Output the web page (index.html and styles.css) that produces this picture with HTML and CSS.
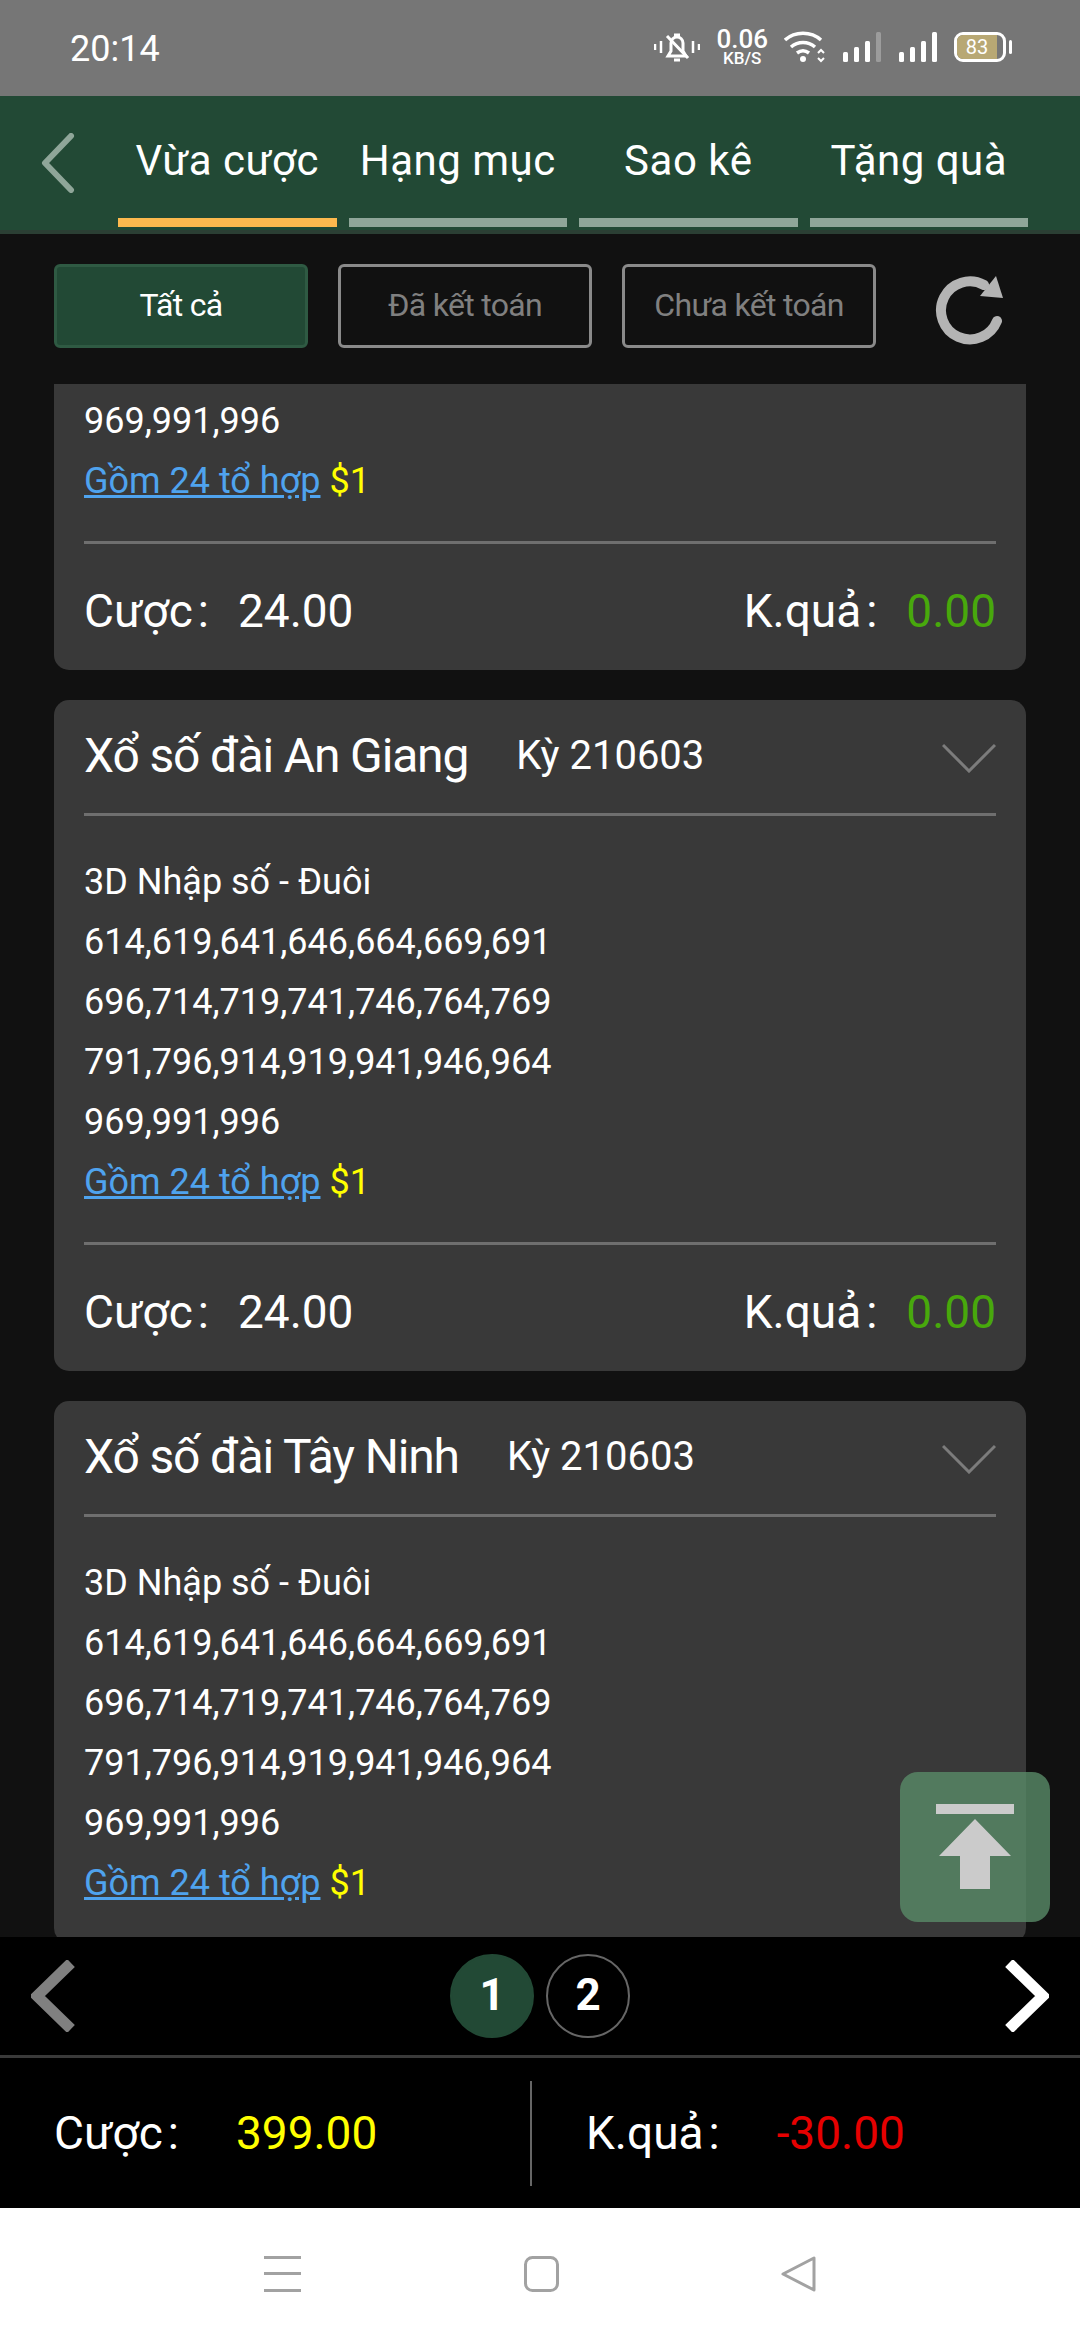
FILE: index.html
```html
<!DOCTYPE html>
<html>
<head>
    <title>Vừa cược</title>
    <link rel="stylesheet" href="styles.css">
</head>
<body>
<div class="phone">
    <div class="status-bar">
        <span class="clock">20:14</span>
        <div class="status-icons">
            <svg class="ic-bell" width="46" height="32" viewBox="0 0 46 32" fill="none" stroke="#fff" stroke-width="3">
                <path d="M1 13v6M7 10v12M39 10v12M45 13v6" stroke-width="2.5"/>
                <path d="M14 25h18l-3-5v-8a6 6 0 0 0-12 0v8z"/>
                <path d="M20 4h6M20 29h6M13 5l21 22"/>
            </svg>
            <div class="speed"><span class="speed-num">0.06</span><span class="speed-unit">KB/S</span></div>
            <svg class="ic-wifi" width="42" height="32" viewBox="0 0 42 32" fill="none" stroke="#fff" stroke-width="3.5">
                <path d="M1 9c10-9 26-9 36 0M7 16c7-6 17-6 24 0M13 22c4-3 8-3 12 0"/>
                <circle cx="19" cy="28" r="3" fill="#fff" stroke="none"/>
                <path d="M34 22l3-3 3 3M34 27l3 3 3-3" stroke-width="2"/>
            </svg>
            <svg width="40" height="32" viewBox="0 0 40 32" fill="#fff">
                <rect x="1" y="21" width="5" height="10" rx="1.5"/>
                <rect x="12" y="16" width="5" height="15" rx="1.5"/>
                <rect x="23" y="10" width="5" height="21" rx="1.5"/>
                <rect x="34" y="1" width="5" height="30" rx="1.5" fill="#9c9c9c"/>
            </svg>
            <svg width="40" height="32" viewBox="0 0 40 32" fill="#fff">
                <rect x="1" y="21" width="5" height="10" rx="1.5"/>
                <rect x="12" y="16" width="5" height="15" rx="1.5"/>
                <rect x="23" y="10" width="5" height="21" rx="1.5"/>
                <rect x="34" y="1" width="5" height="30" rx="1.5"/>
            </svg>
            <div class="battery">
                <div class="battery-body"><span class="battery-fill">83</span></div>
                <div class="battery-nub"></div>
            </div>
        </div>
    </div>

    <div class="top-bar">
        <svg class="back" width="36" height="60" viewBox="0 0 36 60" fill="none" stroke="#8fa699" stroke-width="6" stroke-linecap="round" stroke-linejoin="round">
            <path d="M31 3L5 30l26 27"/>
        </svg>
        <div class="tabs">
            <div class="tab active">Vừa cược</div>
            <div class="tab">Hạng mục</div>
            <div class="tab">Sao kê</div>
            <div class="tab">Tặng quà</div>
        </div>
    </div>

    <div class="filters">
        <div class="filter on">Tất cả</div>
        <div class="filter">Đã kết toán</div>
        <div class="filter">Chưa kết toán</div>
        <svg class="refresh" width="72" height="72" viewBox="0 0 72 72" fill="none">
            <path d="M63 47A29 29 0 1 1 50 11" stroke="#b4b4b4" stroke-width="10" stroke-linecap="round"/>
            <path d="M62 2l7 22-23-2z" fill="#b4b4b4"/>
        </svg>
    </div>

    <div class="list">
        <div class="card cut">
            <div class="card-body">
                <div class="row">969,991,996</div>
                <div class="row"><a class="link">Gồm 24 tổ hợp</a> <span class="price">$1</span></div>
            </div>
            <div class="card-foot">
                <div><span class="key">Cược</span><span class="colon">:</span>24.00</div>
                <div><span class="key">K.quả</span><span class="colon">:</span><span class="green">0.00</span></div>
            </div>
        </div>

        <div class="card">
            <div class="card-head">
                <span class="title">Xổ số đài An Giang</span>
                <span class="period">Kỳ 210603</span>
                <svg class="chev" width="54" height="30" viewBox="0 0 54 30" fill="none" stroke="#7c7c7c" stroke-width="3"><path d="M1 2l26 26L53 2"/></svg>
            </div>
            <div class="card-body">
                <div class="row">3D Nhập số - Đuôi</div>
                <div class="row">614,619,641,646,664,669,691</div>
                <div class="row">696,714,719,741,746,764,769</div>
                <div class="row">791,796,914,919,941,946,964</div>
                <div class="row">969,991,996</div>
                <div class="row"><a class="link">Gồm 24 tổ hợp</a> <span class="price">$1</span></div>
            </div>
            <div class="card-foot">
                <div><span class="key">Cược</span><span class="colon">:</span>24.00</div>
                <div><span class="key">K.quả</span><span class="colon">:</span><span class="green">0.00</span></div>
            </div>
        </div>

        <div class="card">
            <div class="card-head">
                <span class="title">Xổ số đài Tây Ninh</span>
                <span class="period">Kỳ 210603</span>
                <svg class="chev" width="54" height="30" viewBox="0 0 54 30" fill="none" stroke="#7c7c7c" stroke-width="3"><path d="M1 2l26 26L53 2"/></svg>
            </div>
            <div class="card-body">
                <div class="row">3D Nhập số - Đuôi</div>
                <div class="row">614,619,641,646,664,669,691</div>
                <div class="row">696,714,719,741,746,764,769</div>
                <div class="row">791,796,914,919,941,946,964</div>
                <div class="row">969,991,996</div>
                <div class="row"><a class="link">Gồm 24 tổ hợp</a> <span class="price">$1</span></div>
            </div>
        </div>

        <div class="to-top">
            <svg width="78" height="86" viewBox="0 0 78 86" fill="#cbcbcb">
                <rect x="0" y="0" width="78" height="10"/>
                <path d="M39 15l36 37H54v33H24V52H3z"/>
            </svg>
        </div>
    </div>

    <div class="pager">
        <svg width="44" height="72" viewBox="0 0 44 72" fill="none" stroke="#808080" stroke-width="11"><path d="M40 3L6 36l34 33"/></svg>
        <div class="pages">
            <div class="page on">1</div>
            <div class="page">2</div>
        </div>
        <svg width="44" height="72" viewBox="0 0 44 72" fill="none" stroke="#fff" stroke-width="11"><path d="M4 3l34 33L4 69"/></svg>
    </div>

    <div class="totals">
        <div class="total left"><span class="key">Cược</span><span class="colon wide">:</span><span class="yellow">399.00</span></div>
        <div class="total right"><span class="key">K.quả</span><span class="colon wide">:</span><span class="red">-30.00</span></div>
    </div>

    <div class="nav-bar">
        <svg width="37" height="36" viewBox="0 0 37 36" fill="#a2a2a2">
            <rect width="37" height="3"/><rect y="16" width="37" height="3"/><rect y="33" width="37" height="3"/>
        </svg>
        <svg width="35" height="36" viewBox="0 0 35 36" fill="none" stroke="#a2a2a2" stroke-width="3"><rect x="1.5" y="1.5" width="32" height="33" rx="7"/></svg>
        <svg width="35" height="36" viewBox="0 0 35 36" fill="none" stroke="#a2a2a2" stroke-width="3" stroke-linejoin="round"><path d="M33 2v32L2 18z"/></svg>
    </div>
</div>
</body>
</html>
```

FILE: styles.css
```css
body {
    margin: 0;
    font-family: Roboto, "Noto Sans", sans-serif;
    color: #fff;
    background: #111;
}

.phone {
    width: 1080px;
    height: 2340px;
    display: flex;
    flex-direction: column;
    overflow: hidden;
}

.status-bar {
    height: 96px;
    flex: none;
    background: #767676;
    display: flex;
    align-items: center;
    padding: 0 68px 2px 70px;
    box-sizing: border-box;
    justify-content: space-between;
}

.clock {
    font-size: 36px;
    margin-top: 3px;
}

.status-icons {
    display: flex;
    align-items: center;
    gap: 16px;
}

.speed {
    display: flex;
    flex-direction: column;
    align-items: center;
    font-weight: 500;
    line-height: 1;
}

.speed-num {
    font-size: 26px;
    line-height: 23px;
}

.speed-unit {
    font-size: 17px;
    line-height: 15px;
}

.battery {
    display: flex;
    align-items: center;
    gap: 3px;
}

.battery-body {
    width: 52px;
    height: 30px;
    box-sizing: border-box;
    border: 3px solid #fff;
    border-radius: 9px;
    overflow: hidden;
}

.battery-fill {
    display: block;
    width: 40px;
    height: 100%;
    background: #b8a874;
    font-size: 20px;
    line-height: 24px;
    text-align: center;
}

.battery-nub {
    width: 3px;
    height: 14px;
    background: #fff;
    border-radius: 2px;
}

.top-bar {
    height: 138px;
    flex: none;
    background: #224935;
    border-bottom: 4px solid #2b3f34;
    box-sizing: border-box;
    display: flex;
    padding-left: 40px;
}

.back {
    margin: 37px 42px 0 0;
}

.tabs {
    display: flex;
    gap: 12px;
}

.tab {
    width: 218.5px;
    height: 131px;
    box-sizing: border-box;
    padding-top: 39px;
    text-align: center;
    font-size: 42px;
    letter-spacing: .5px;
    line-height: 52px;
    border-bottom: 9px solid #8fa699;
}

.tab.active {
    border-bottom-color: #fdb94e;
}

.filters {
    height: 150px;
    flex: none;
    box-sizing: border-box;
    padding: 30px 0 0 54px;
    display: flex;
    gap: 30px;
    background: #111;
}

.filter {
    width: 254px;
    height: 84px;
    box-sizing: border-box;
    border: 3px solid #8a8a8a;
    border-radius: 6px;
    color: #808080;
    font-size: 32px;
    line-height: 76px;
    text-align: center;
    letter-spacing: -.7px;
}

.filter.on {
    background: #224935;
    border-color: #2f5a43;
    color: #fff;
}

.refresh {
    margin: 10px 0 0 28px;
}

.list {
    flex: 1;
    position: relative;
    overflow: hidden;
    padding: 0 54px;
    background: #111;
}

.card {
    background: #393939;
    border-radius: 15px;
    margin-bottom: 30px;
    padding: 0 30px;
}

.card.cut {
    border-radius: 0 0 15px 15px;
}

.card-head {
    height: 116px;
    box-sizing: border-box;
    padding-bottom: 3px;
    display: flex;
    align-items: center;
    border-bottom: 3px solid #6f6f6f;
}

.title {
    font-size: 48px;
    letter-spacing: -1.15px;
}

.period {
    font-size: 40px;
    margin-left: 48px;
}

.chev {
    margin-left: auto;
    margin-top: 6px;
}

.card-body {
    padding: 36px 0 30px;
}

.card.cut .card-body {
    padding-top: 7px;
}

.row {
    font-size: 36px;
    line-height: 60px;
}

.link {
    color: #4fa3ee;
    text-decoration: underline;
}

.price {
    color: #ff0;
}

.card-foot {
    height: 129px;
    box-sizing: border-box;
    padding-top: 8px;
    border-top: 3px solid #6f6f6f;
    display: flex;
    justify-content: space-between;
    align-items: center;
    font-size: 46px;
}

.colon {
    margin: 0 29px 0 5px;
}

.colon.wide {
    margin: 0 57px 0 5px;
}

.green {
    color: #48a80c;
}

.to-top {
    position: absolute;
    top: 1388px;
    left: 900px;
    width: 150px;
    height: 150px;
    border-radius: 18px;
    background: rgba(89, 139, 104, .8);
    display: flex;
    align-items: center;
    justify-content: center;
}

.pager {
    height: 118px;
    flex: none;
    background: #000;
    border-bottom: 3px solid #3a3a3a;
    box-sizing: content-box;
    display: flex;
    align-items: center;
    justify-content: space-between;
    padding: 0 31px;
}

.pages {
    display: flex;
    gap: 12px;
}

.page {
    width: 84px;
    height: 84px;
    box-sizing: border-box;
    border: 2px solid #666;
    border-radius: 50%;
    text-align: center;
    font-size: 44px;
    font-weight: 700;
    line-height: 78px;
}

.page.on {
    background: #224935;
    border-color: #224935;
}

.totals {
    height: 150px;
    flex: none;
    background: #000;
    display: flex;
    align-items: center;
    font-size: 46px;
}

.total.left {
    width: 532px;
    box-sizing: border-box;
    padding-left: 54px;
    line-height: 105px;
    border-right: 2px solid #666;
}

.total.right {
    padding-left: 54px;
}

.yellow {
    color: #ff0;
}

.red {
    color: #e60000;
}

.nav-bar {
    flex: none;
    height: 132px;
    background: #fff;
    display: flex;
    align-items: center;
    padding: 0 264px;
    justify-content: space-between;
}
```
